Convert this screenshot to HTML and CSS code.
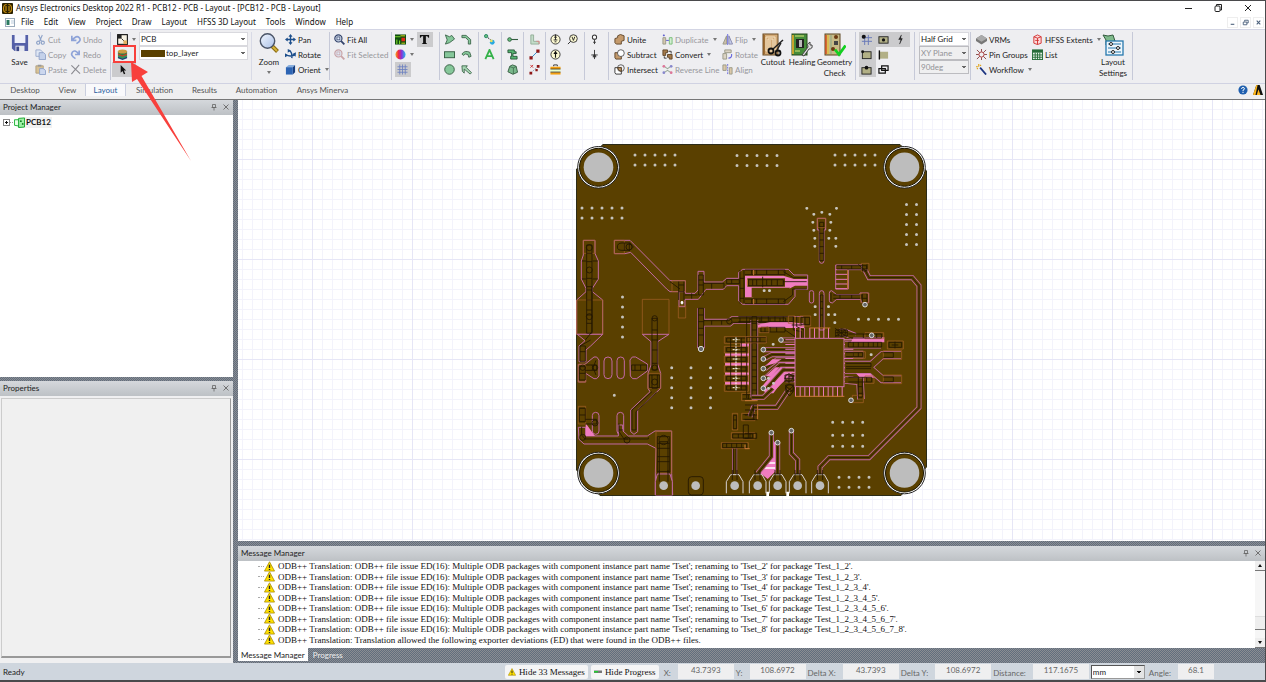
FILE: index.html
```html
<!DOCTYPE html>
<html lang="en">
<head>
<meta charset="utf-8">
<title>Ansys Electronics Desktop 2022 R1 - PCB12 - PCB - Layout</title>
<link rel="stylesheet" href="styles.css">
</head>
<body>
<svg class="defs" aria-hidden="true">
  <defs>
    <linearGradient id="hue"><stop offset="0" stop-color="#f6a21a"/><stop offset=".3" stop-color="#ee2a48"/><stop offset=".6" stop-color="#8a32d8"/><stop offset="1" stop-color="#22b8f0"/></linearGradient>
    <linearGradient id="lens" x2="1" y2="1"><stop offset="0" stop-color="#f3f8ff"/><stop offset="1" stop-color="#a9bfe6"/></linearGradient>
    <symbol id="warn" viewBox="0 0 12 12"><path d="M6 .8 11.5 11H.5Z" fill="#ffe000" stroke="#a08400" stroke-width=".8" stroke-linejoin="round"/><path d="M6 4v3.6M6 8.6v1.3" stroke="#222" stroke-width="1.5"/></symbol>
    <symbol id="pin" viewBox="0 0 8 8"><path d="M2.5 1.500h3v3h-3zM1.500 4.500h5M4 4.500V7.500" fill="none" stroke="#666" stroke-width=".8"/></symbol>
    <symbol id="x" viewBox="0 0 8 8"><path d="M1.5 1.5l5 5M6.5 1.5l-5 5" stroke="#666" stroke-width=".9"/></symbol>
    <symbol id="lensic" viewBox="0 0 12 12"><circle cx="4.8" cy="4.8" r="3.9" fill="#dfe9f7" stroke="currentColor" stroke-width="1.3"/><rect x="3.2" y="3.2" width="3.2" height="3.2" fill="none" stroke="currentColor" stroke-width=".8"/><path d="M7.8 7.8 11.3 11.3" stroke="currentColor" stroke-width="2"/></symbol>
  </defs>
</svg>

<header class="titlebar">
  <svg class="logo" viewBox="0 0 11 11"><rect width="11" height="11" rx="1" fill="#2a2000"/><path d="M4.600 1.500Q1.500 1.500 1.500 5.500t3.100 4M6.400 1.500q3.100 0 3.100 4t-3.100 4M4 3v5M7 3v5" fill="none" stroke="#c58d10" stroke-width="1.200"/></svg>
  <h1>Ansys Electronics Desktop 2022 R1 - PCB12 - PCB - Layout - [PCB12 - PCB - Layout]</h1>
  <div class="winbtns">
    <button aria-label="Minimize"><svg viewBox="0 0 10 10"><path d="M2 5.500h7" stroke="#222"/></svg></button>
    <button aria-label="Restore"><svg viewBox="0 0 10 10"><rect x="2" y="3" width="5" height="5.500" rx="1" fill="none" stroke="#222"/><path d="M3.500 3V1.500H8.500V7H7" fill="none" stroke="#222"/></svg></button>
    <button aria-label="Close"><svg viewBox="0 0 10 10"><path d="M2 2l6 6M8 2l-6 6" stroke="#222"/></svg></button>
  </div>
</header>

<nav class="menubar">
  <svg class="docicon" viewBox="0 0 10 9"><rect x=".5" y=".5" width="9" height="8" fill="#fff" stroke="#9ab"/><rect x="1.500" y="2" width="3" height="5" fill="#2a7a60"/><path d="M6 3h3M6 5h3" stroke="#bcd"/></svg>
  <button>File</button><button>Edit</button><button>View</button><button>Project</button><button>Draw</button><button>Layout</button><button>HFSS 3D Layout</button><button>Tools</button><button>Window</button><button>Help</button>
  <div class="mdibtns">
    <button aria-label="Minimize document"><svg viewBox="0 0 10 10"><path d="M3 7h4" stroke="#4a5f7a" stroke-width="1.200"/></svg></button>
    <button aria-label="Restore document"><svg viewBox="0 0 10 10"><path d="M4 4V2.500h4v3H6.500M2.500 4.500h4v3h-4z" fill="none" stroke="#4a5f7a"/></svg></button>
    <button aria-label="Close document"><svg viewBox="0 0 10 10"><path d="M3 3l4 4M7 3l-4 4" stroke="#4a5f7a" stroke-width="1.200"/></svg></button>
  </div>
</nav>

<section class="ribbon">
  <div class="group g-edit">
    <button class="big save"><svg viewBox="0 0 20 20"><path d="M1 1h18v18H4L1 16Z" fill="#5560a8"/><rect x="4" y="1" width="12" height="9" fill="#eef0fa"/><rect x="5" y="13" width="10" height="6" fill="#e6e8f0"/><rect x="6" y="14" width="3" height="5" fill="#3c4788"/></svg><span>Save</span></button>
    <div class="col c-cut">
      <button class="tool off"><svg viewBox="0 0 12 12"><path d="M4 1l3 7M8 1 5 8" stroke="#8ea3c8" stroke-width="1.200"/><circle cx="3.500" cy="9.500" r="1.700" fill="none" stroke="#8ea3c8" stroke-width="1.300"/><circle cx="8.500" cy="9.500" r="1.700" fill="none" stroke="#8ea3c8" stroke-width="1.300"/></svg><span>Cut</span></button>
      <button class="tool off"><svg viewBox="0 0 12 12"><path d="M1 1h5l2 2v5H1z" fill="#dfe7f4" stroke="#9aabcd"/><path d="M4.500 4h5l2 2v5.500h-7z" fill="#c4d1ea" stroke="#8fa2c8"/></svg><span>Copy</span></button>
      <button class="tool off"><svg viewBox="0 0 12 12"><path d="M1 2h8v8H1z" fill="#d8c296" stroke="#b0a080"/><path d="M3 .8h4v2H3z" fill="#999"/><path d="M5 5h4l2.500 2v4.500H5z" fill="#ccd7ee" stroke="#8fa2c8"/></svg><span>Paste</span></button>
    </div>
    <div class="col">
      <button class="tool off"><svg viewBox="0 0 12 12"><path d="M2 2v5h5M2.500 6.500Q7 1 10 4T7 10.500" fill="none" stroke="#8ea3d8" stroke-width="1.800"/></svg><span>Undo</span></button>
      <button class="tool off"><svg viewBox="0 0 12 12"><path d="M10 1.500v4.500H5.500M9.500 5.500Q5 0 2.500 3.500T6 10.500" fill="none" stroke="#8ea3d8" stroke-width="1.800"/></svg><span>Redo</span></button>
      <button class="tool off"><svg viewBox="0 0 12 12"><path d="M1.500 1.500 11 10.500M10 1 1.500 11" stroke="#8a8a90" stroke-width="1.200"/></svg><span>Delete</span></button>
    </div>
  </div>

  <div class="group g-layer">
    <div class="col c-sel">
      <button class="tool drop" aria-label="Component"><svg viewBox="0 0 12 12"><rect x=".7" y=".7" width="10.600" height="10.600" fill="#f8f3e4" stroke="#111" stroke-width="1.200"/><path d="M1 1h4v4H1z" fill="#222"/><path d="M5 5l3 3" stroke="#222"/><path d="M7 7h4v4H7z" fill="#e0b060"/></svg></button>
      <button class="tool" aria-label="Layer stackup"><svg viewBox="0 0 12 12"><path d="M1 8.500v1.500l5 2 5-2V8.500Z" fill="#223e78"/><path d="M1 6.500v2l5 2 5-2v-2Z" fill="#2f9457"/><path d="M1 4.500v2l5 2 5-2v-2Z" fill="#c24428"/><path d="M1 2.800v2l5 2 5-2v-2Z" fill="#307b45"/><ellipse cx="6" cy="2.800" rx="5" ry="2.200" fill="#cf9a42"/></svg></button>
      <button class="tool on" aria-label="Select"><svg viewBox="0 0 12 12"><path d="M4 1v8.500l2-1.800 1.500 3.500 1.500-.7L7.500 7H10Z" fill="#111"/></svg></button>
    </div>
    <div class="combos">
      <select aria-label="Design"><option>PCB</option></select>
      <select class="swatch" aria-label="Active layer"><option>top_layer</option></select>
    </div>
  </div>

  <div class="group g-zoom">
    <button class="big"><svg viewBox="0 0 20 20"><path d="M12 12 18.500 18.500" stroke="#8d6c10" stroke-width="4"/><path d="M12 12 18 18" stroke="#d4b43c" stroke-width="1.800"/><circle cx="8.500" cy="8" r="7.200" fill="url(#lens)" stroke="#4b5568" stroke-width="1.400"/></svg><span>Zoom</span><i class="caret"></i></button>
    <div class="col">
      <button class="tool"><svg viewBox="0 0 12 12"><path d="M6 1v10M1 6h10" stroke="#1d4f8c" stroke-width="1.500"/><path d="M6 0 8.200 3H3.800ZM6 12 8.200 9H3.800ZM0 6l3-2.200v4.400ZM12 6 9 3.800v4.400Z" fill="#1d4f8c"/></svg><span>Pan</span></button>
      <button class="tool"><svg viewBox="0 0 12 12"><path d="M4.500 1.500Q8 3 7.500 10M1 6.500Q6 9 11 6" fill="none" stroke="#1d4f8c" stroke-width="1.600"/><path d="M3 0v4l3.500-2.500ZM12 3.500 8 5.500l3.500 3ZM0 4.500 0 9l3.500-2Z" fill="#1d4f8c"/></svg><span>Rotate</span></button>
      <button class="tool drop"><svg viewBox="0 0 12 12"><path d="M1 3.500 4 1h7L8.500 3.500Z" fill="#88aede"/><path d="M8.500 3.500 11 1v8l-2.500 2.500Z" fill="#163e80"/><path d="M1 3.500h7.500v8H1Z" fill="#2c64b4"/></svg><span>Orient</span></button>
    </div>
  </div>

  <div class="group g-fit">
    <div class="col">
      <button class="tool fit"><svg><use href="#lensic"/></svg><span>Fit All</span></button>
      <button class="tool off fit pinkish"><svg><use href="#lensic"/></svg><span>Fit Selected</span></button>
    </div>
  </div>

  <div class="group g-view">
    <div class="col">
      <button class="tool drop" aria-label="Board display"><svg viewBox="0 0 12 12"><rect y=".5" width="12" height="11" fill="#0d4d0d"/><path d="M0 3h6M2 6v5M5 7v4" stroke="#7ad02a" stroke-width="1.200"/><path d="M7 4h4v4H7z" fill="#e02818"/><path d="M6 2h5M7 10h4" stroke="#e8e020"/></svg></button>
      <button class="tool drop" aria-label="Colors"><svg viewBox="0 0 12 12"><circle cx="6" cy="6" r="5.500" fill="url(#hue)"/></svg></button>
      <button class="tool on" aria-label="Grid"><svg viewBox="0 0 12 12"><path d="M3 .5v11M6 .5v11M9 .5v11M.5 3h11M.5 6h11M.5 9h11" stroke="#6b7fc0" stroke-width=".9"/></svg></button>
    </div>
    <div class="col"><button class="tool on" aria-label="Text display"><svg viewBox="0 0 12 12"><path d="M1 1h10v3h-.8Q10 2.200 7.500 2.200v7.300L9 10.800H3l1.500-1.300V2.200Q2 2.200 1.800 4H1Z" fill="#111"/></svg></button></div>
  </div>

  <div class="group g-draw">
    <div class="col">
      <button class="tool" aria-label="Polygon"><svg viewBox="0 0 12 12"><path d="M1.500 1 6 3 8.500 1.500 11.500 5.500 6 9.500 1.500 11 3.500 6.500Z" fill="#86c79a" stroke="#335c40" stroke-width=".9"/></svg></button>
      <button class="tool" aria-label="Rectangle"><svg viewBox="0 0 12 12"><rect x=".5" y="3" width="11" height="6.500" fill="#86c79a" stroke="#335c40"/></svg></button>
      <button class="tool" aria-label="Circle"><svg viewBox="0 0 12 12"><circle cx="6" cy="6" r="5.200" fill="#86c79a" stroke="#335c40"/></svg></button>
    </div>
    <div class="col">
      <button class="tool" aria-label="Line"><svg viewBox="0 0 12 12"><path d="M1 1.500h4.500L10.500 6v5H8V7L5 4H1Z" fill="#86c79a" stroke="#335c40" stroke-width=".9"/></svg></button>
      <button class="tool" aria-label="Arc"><svg viewBox="0 0 12 12"><path d="M1 5.500Q4 1 9.500 3.500L11 8 8.500 9 7.500 6Q4.500 4.500 2.500 7Z" fill="#86c79a" stroke="#335c40" stroke-width=".9"/></svg></button>
      <button class="tool" aria-label="Arrow"><svg viewBox="0 0 12 12"><path d="M1 2h6L5.500 3.500 11.500 9.500 10 11 3.500 5.500V10L1.500 8Z" fill="#a9d8b5" stroke="#335c40" stroke-width=".9"/></svg></button>
    </div>
  </div>
  <div class="group g-mid">
    <div class="col">
      <button class="tool" aria-label="Measure"><svg viewBox="0 0 12 12"><path d="M2.500 2.500 9 8" stroke="#111" stroke-dasharray="1.500 1"/><circle cx="2.300" cy="2.300" r="1.800" fill="#6dbb7a" stroke="#286"/><circle cx="9" cy="9" r="2.600" fill="#28a8e0"/><circle cx="8" cy="7.500" r="1.500" fill="#e8e060"/></svg></button>
      <button class="tool" aria-label="Text"><svg viewBox="0 0 12 12"><path d="M1.500 11 6 1l4.500 10M3.300 7.700h5.400" fill="none" stroke="#35b24a" stroke-width="2"/></svg></button>
    </div>
  </div>
  <div class="group g-one">
    <div class="col">
      <button class="tool" aria-label="Pin"><svg viewBox="0 0 12 12"><path d="M4 6h8" stroke="#355c40" stroke-width="1.200"/><circle cx="2.800" cy="6" r="2" fill="#67c07c" stroke="#2b5c3b"/></svg></button>
      <button class="tool" aria-label="Via"><svg viewBox="0 0 12 12"><path d="M1 1h7v2h2v2H6.500v3H11v3H4V8h1V4H1Z" fill="#57b672" stroke="#204c30" stroke-width=".9"/></svg></button>
      <button class="tool" aria-label="Component"><svg viewBox="0 0 12 12"><path d="M1 8.500 3 2.500 6 1l4 1.500L11.500 9l-5 2.200Z" fill="#7ab98c" stroke="#335c40"/><path d="M3 3l4 1.200 3-1.400M7 4.200V11" fill="none" stroke="#335c40" stroke-width=".7"/></svg></button>
    </div>
  </div>
  <div class="group g-one">
    <div class="col">
      <button class="tool" aria-label="Trace corner"><svg viewBox="0 0 12 12"><path d="M2 1h3v7h6v3H2Z" fill="#c3dcc8" stroke="#8aa890" stroke-width=".9"/><path d="M8 8h3v3" fill="none" stroke="#d88"/></svg></button>
      <button class="tool" aria-label="Connect"><svg viewBox="0 0 12 12"><path d="M2 10 10 2" stroke="#28c"/><path d="M.5 8h3.500v3.500H.5zM8 .5h3.500V4H8z" fill="#8e1616"/></svg></button>
      <button class="tool" aria-label="Disconnect"><svg viewBox="0 0 12 12"><path d="M2 10 10 2" stroke="#9ab" stroke-dasharray="2 1"/><path d="M.5 8.500h3v3h-3zM8.500 1h3v3h-3zM7 5.500h2.500V8H7z" fill="#8e1616"/><path d="M1.500 1l3 3M4.500 1l-3 3" stroke="#c33"/></svg></button>
    </div>
  </div>
  <div class="group g-port">
    <div class="col">
      <button class="tool" aria-label="Port"><svg viewBox="0 0 12 12"><circle cx="6" cy="6" r="5" fill="#fbf8d0" stroke="#333"/><path d="M6 .5v6M4 6.500h4M4.500 3.500h3M5 8.500h2" stroke="#222"/></svg></button>
      <button class="tool" aria-label="Current source"><svg viewBox="0 0 12 12"><circle cx="6" cy="6" r="5" fill="#fbf8d0" stroke="#333"/><path d="M6 9.500V3" stroke="#111" stroke-width="1.200"/><path d="M6 2 8.300 5.500H3.700Z" fill="#111"/></svg></button>
      <button class="tool" aria-label="Excitation"><svg viewBox="0 0 12 12"><path d="M4 2.500V1h4v1.500" fill="none" stroke="#333"/><rect x=".5" y="3" width="11" height="2.500" fill="#f4a010"/><rect x=".5" y="5.500" width="11" height="3" fill="#e8ffc8"/><rect x=".5" y="9" width="11" height="2.500" fill="#f4a010"/><path d="M.5 5.500h11M.5 8.800h11" stroke="#222" stroke-width=".8"/></svg></button>
    </div>
    <div class="col"><button class="tool" aria-label="Voltage probe"><svg viewBox="0 0 12 12"><circle cx="7" cy="5" r="4.200" fill="#fbf8d0" stroke="#333"/><path d="M5.500 3 7 7l1.500-4M4 8 1 11" fill="none" stroke="#222"/></svg></button></div>
  </div>
  <div class="group g-gnd">
    <div class="col">
      <button class="tool" aria-label="Terminal"><svg viewBox="0 0 12 12"><circle cx="6" cy="3.500" r="2.300" fill="#fff" stroke="#333" stroke-width="1.100"/><path d="M6 6v5M4.500 9h3" stroke="#333"/></svg></button>
      <button class="tool" aria-label="Ground"><svg viewBox="0 0 12 12"><path d="M6 1v10M2.500 6.500h7M4 8.500h4" stroke="#333"/><circle cx="6" cy="7.500" r="1.500" fill="#333"/></svg></button>
    </div>
  </div>

  <div class="group g-bool">
    <div class="col c-unite">
      <button class="tool"><svg viewBox="0 0 12 12"><path d="M1 5 4 4V2l3-1.500L11 2v5L8 8v3H2.500L1 9.500Z" fill="#c49a6c" stroke="#5e4528"/></svg><span>Unite</span></button>
      <button class="tool"><svg viewBox="0 0 12 12"><path d="M1 4h7v7H2L1 9.500Z" fill="#c49a6c" stroke="#5e4528"/><circle cx="7.500" cy="4.500" r="3.700" fill="#fff" stroke="#333" stroke-width=".8"/></svg><span>Subtract</span></button>
      <button class="tool"><svg viewBox="0 0 12 12"><path d="M1 4h7v7H2L1 9.500Z" fill="#fff" stroke="#333"/><circle cx="7.500" cy="4.500" r="3.700" fill="none" stroke="#333" stroke-width=".8"/><path d="M4 4h4v4Q4.500 7.500 4 4Z" fill="#c49a6c" stroke="#5e4528"/></svg><span>Intersect</span></button>
    </div>
    <div class="col c-dup">
      <button class="tool off drop"><svg viewBox="0 0 12 12"><path d="M1 4h3v7H1z" fill="#d5c8b0" stroke="#998"/><path d="M8 4h3v7H8z" fill="#d2efd2" stroke="#7b7"/><path d="M4.500 7h3M2 .5v2M1 1.500h2" stroke="#55c"/></svg><span>Duplicate</span></button>
      <button class="tool drop"><svg viewBox="0 0 12 12"><path d="M1 1h5v3H4v3H1zM6 6h5v5H8V9H6z" fill="#a4794a" stroke="#5e4528"/><path d="M7 2.500h3V5M5 10H2.500V8" fill="none" stroke="#333"/></svg><span>Convert</span></button>
      <button class="tool off"><svg viewBox="0 0 12 12"><path d="M1.500 2 6 5l4.500-3M1.500 10 6 7l4.500 3" fill="none" stroke="#9a9" stroke-width="1.200"/><circle cx="2" cy="2.500" r="1.500" fill="#d79"/><circle cx="10" cy="2.500" r="1.500" fill="#88c"/><circle cx="2" cy="9.500" r="1.500" fill="#88c"/><circle cx="10" cy="9.500" r="1.500" fill="#d79"/></svg><span>Reverse Line</span></button>
    </div>
    <div class="col c-flip">
      <button class="tool off drop"><svg viewBox="0 0 12 12"><path d="M5 2v9H1Z" fill="#cdbfa8" stroke="#998"/><path d="M7.500 2v9h4Z" fill="#c5cdec" stroke="#88a"/><path d="M6.200 0v12" stroke="#66d"/></svg><span>Flip</span></button>
      <button class="tool off"><svg viewBox="0 0 12 12"><path d="M1 5h4v6H1zM3 1h7v3H3z" fill="#dcd4c4" stroke="#998"/><path d="M7 10q4 0 3.500-4.500" fill="none" stroke="#66d" stroke-width="1.200"/></svg><span>Rotate</span></button>
      <button class="tool off"><svg viewBox="0 0 12 12"><path d="M1 1h3.500v6H1zM8 4h3v7H8z" fill="#dcc8a8" stroke="#998"/><path d="M6.200 0v12" stroke="#66d" stroke-dasharray="2 1"/></svg><span>Align</span></button>
    </div>
    <button class="big tall b-cut"><svg viewBox="0 0 22 24"><rect x="1" y="1" width="15" height="21" fill="#d4ab78" stroke="#6a4a22"/><path d="M4 4h9v14H4zM6 6h5v10H6zM8 7v8" fill="none" stroke="#f4e2c2"/><path d="M2 2v19" stroke="#8c5a20" stroke-width="1.500"/><path d="M21 7 11 16M19 10 15 17" stroke="#222" stroke-width="1.500"/><circle cx="9" cy="18" r="2.500" fill="none" stroke="#111" stroke-width="1.800"/><circle cx="16" cy="20" r="2.500" fill="none" stroke="#111" stroke-width="1.800"/></svg><span>Cutout</span></button>
    <button class="big tall b-heal"><svg viewBox="0 0 22 24"><rect x="1" y="1" width="15" height="21" fill="#458c3a" stroke="#264a1a"/><path d="M2 2v19" stroke="#c7a42c" stroke-width="2"/><path d="M5 6h8v9H5z" fill="#222"/><path d="M8 7h3v7H8z" fill="#bbb"/><path d="M4 18h5M4 3h9" stroke="#dce878"/><path d="M11 22l6-8q-2-3 2-5l0 3 2 0q1 4-3 4l-5 7Z" fill="#ddd" stroke="#444"/></svg><span>Healing</span></button>
    <button class="big tall"><svg viewBox="0 0 22 24"><rect x="1" y="1" width="15" height="21" fill="#c8ba86" stroke="#5a4420"/><path d="M2 2v19" stroke="#d84818" stroke-width="1.400"/><path d="M4 2v19M7 17h6" stroke="#e8c020"/><path d="M7 2v19" stroke="#8aa888"/><circle cx="12" cy="4" r="2" fill="#6b3912"/><circle cx="9" cy="16" r="2" fill="#6b3912"/><path d="M10 8h4v4h-4z" fill="#444"/><path d="M11 16.500l4 5 6.500-9" fill="none" stroke="#12d020" stroke-width="2.800"/></svg><span>Geometry<br>Check</span></button>
  </div>

  <div class="group g-snap">
    <div class="snap">
      <button class="tool on" aria-label="Snap grid"><svg viewBox="0 0 12 12"><path d="M4 1v11M8 1v11M1 4h11M1 8h11" stroke="#6677b8"/><circle cx="3" cy="3" r="2.200" fill="#111"/></svg></button>
      <button class="tool on" aria-label="Snap center"><svg viewBox="0 0 12 12"><rect x="1" y="3" width="10" height="7" fill="#b2b086" stroke="#222"/><circle cx="6" cy="6.500" r="1.800" fill="#111"/></svg></button>
      <button class="tool on" aria-label="Snap electrical"><svg viewBox="0 0 12 12"><path d="M7 1 4 6h2.500L5 11 8 5H6Z" fill="#111" stroke="#111" stroke-width=".4"/></svg></button>
      <button class="tool on" aria-label="Snap vertex"><svg viewBox="0 0 12 12"><rect x="1.500" y="3" width="9.500" height="7.500" fill="#b2b086" stroke="#222"/><circle cx="1.800" cy="3" r="1.600" fill="#111"/></svg></button>
      <button class="tool" aria-label="Snap edge"><svg viewBox="0 0 12 12"><rect x="1" y="3" width="10" height="7.500" fill="#b2b086"/><path d="M1.500 1.500v10" stroke="#111" stroke-width="1.500"/></svg></button><i></i>
      <button class="tool on" aria-label="Snap midpoint"><svg viewBox="0 0 12 12"><rect x="1" y="4" width="10" height="7" fill="#b2b086" stroke="#222"/><circle cx="6" cy="4" r="2" fill="#111"/></svg></button>
      <button class="tool" aria-label="Snap intersection"><svg viewBox="0 0 12 12"><path d="M4 2h7v5H4zM1 5h7v5H1z" fill="none" stroke="#111" stroke-width="1.300"/></svg></button>
    </div>
  </div>
  <div class="group g-grid">
    <div class="combos">
      <select aria-label="Grid"><option>Half Grid</option></select>
      <select aria-label="Plane" disabled><option>XY Plane</option></select>
      <select aria-label="Angle" disabled><option>90deg</option></select>
    </div>
  </div>
  <div class="group g-last">
    <div class="col c-vrm">
      <button class="tool"><svg viewBox="0 0 12 12"><path d="M0 5 6 1l6 4v2.500L6 11.500 0 7.500Z" fill="#777"/><path d="M0 5 6 1l6 4-6 3.500Z" fill="#aaa"/></svg><span>VRMs</span></button>
      <button class="tool"><svg viewBox="0 0 12 12"><path d="M1 1l3 3M6 0v3M11 1 8 4M0 6h3M9 6h3M1 11l3-3M6 9v3M11 11 8 8" stroke="#844"/><circle cx="6" cy="6" r="2.800" fill="none" stroke="#a33"/></svg><span>Pin Groups</span></button>
      <button class="tool drop"><svg viewBox="0 0 12 12"><path d="M4.500 4 11 11.500" stroke="#1c3480" stroke-width="1.900"/><path d="M3 0v3M0 3h2M5.500 1 4.500 2M1 5.500 2 4.500" stroke="#e0a010" stroke-width="1.200"/></svg><span>Workflow</span></button>
    </div>
    <div class="col c-hfss">
      <button class="tool drop"><svg viewBox="0 0 12 12"><path d="M2 3 6 1l4 2v7l-4 1.500L2 10Z" fill="#fbdada" stroke="#d23030"/><path d="M2 3l4 1.500L10 3M6 4.500v7M3.500 7h4" fill="none" stroke="#d23030"/></svg><span>HFSS Extents</span></button>
      <button class="tool"><svg viewBox="0 0 12 12"><rect x=".5" y="1" width="11" height="10.500" fill="#e4f2e6" stroke="#256a38"/><path d="M.5 1h11v3H.5z" fill="#256a38"/><path d="M3.500 4v7.500M6 4v7.500M8.500 4v7.500M.5 6.500h11M.5 9h11" stroke="#256a38"/></svg><span>List</span></button>
    </div>
    <button class="big tall"><svg viewBox="0 0 22 24"><path d="M1 2l5 1 5-1 2 6-9 4 0-5Z" fill="#7fba8c" stroke="#355c40"/><rect x="4" y="8" width="17" height="14" fill="#eef6fb" stroke="#2779ae" stroke-width="1.300"/><path d="M6 11h13M6 15h13M6 19h13" stroke="#2779ae" stroke-width="1.200"/><circle cx="9" cy="11" r="1.500" fill="#fff" stroke="#222"/><circle cx="16" cy="15" r="1.500" fill="#fff" stroke="#222"/><circle cx="11" cy="19" r="1.500" fill="#fff" stroke="#222"/></svg><span>Layout<br>Settings</span></button>
  </div>
</section>

<nav class="tabs">
  <button>Desktop</button><button>View</button><button class="active">Layout</button><button>Simulation</button><button>Results</button><button>Automation</button><button>Ansys Minerva</button>
  <div class="help">
    <button aria-label="Help"><svg viewBox="0 0 12 12"><circle cx="6" cy="6" r="5.500" fill="#1f5fae"/><path d="M4.200 4.600Q4.300 3 6 3t1.800 1.500Q7.800 5.500 6 6.200V7.500M6 8.400V9.600" fill="none" stroke="#fff" stroke-width="1.200"/></svg></button>
    <button aria-label="Ansys"><svg viewBox="0 0 12 12"><path d="M0 12 4 0h4l4 12Z" fill="#111"/><path d="M0 12 4 0h1.500L3 12ZM4.500 12 6.500 5 9 12Z" fill="#ffb71b"/></svg></button>
  </div>
</nav>

<main class="work">
  <aside class="side">
    <section class="pane tree">
      <header class="panehead"><h2>Project Manager</h2><button aria-label="Pin"><svg><use href="#pin"/></svg></button><button aria-label="Close"><svg><use href="#x"/></svg></button></header>
      <ul class="projects"><li>
        <svg class="expand" viewBox="0 0 11 9"><rect x=".5" y="1.500" width="6" height="6" fill="#fff" stroke="#888"/><path d="M2 4.500h3M3.500 3v3" stroke="#111"/><path d="M7 4.500h4" stroke="#999" stroke-dasharray="1 1"/></svg>
        <svg class="proj" viewBox="0 0 12 12"><path d="M.5 3h4l1.500 1.500V10l-5.500-1Z" fill="#e8ffe8" stroke="#15b030"/><path d="M5 1.500 11.500 1v10l-6.500.5Z" fill="#9df0a4" stroke="#12a028"/><circle cx="7.500" cy="4.500" r="1" fill="#0a7a1c"/><circle cx="9.500" cy="7.500" r="1" fill="#0a7a1c"/></svg>
        <span>PCB12</span></li></ul>
    </section>
    <div class="split h"></div>
    <section class="pane props">
      <header class="panehead"><h2>Properties</h2><button aria-label="Pin"><svg><use href="#pin"/></svg></button><button aria-label="Close"><svg><use href="#x"/></svg></button></header>
      <div class="sheet"></div>
    </section>
  </aside>
  <div class="split v"></div>
  <div class="center">
    <section class="canvas">
      <svg class="board" viewBox="571 136 361 370" role="img" aria-label="PCB layout">
        <path class="copper edge" d="M603 144.500H900L926.500 171V467L901 495.500H600L576.500 470V169Z"/>
        <g class="mount">
          <g class="ring"><circle cx="598.500" cy="167.300" r="20.800"/><circle cx="904.500" cy="167.300" r="20.800"/><circle cx="598.500" cy="473" r="20.800"/><circle cx="904.500" cy="473" r="20.800"/></g>
          <g class="rim"><circle cx="598.500" cy="167.300" r="19"/><circle cx="904.500" cy="167.300" r="19"/><circle cx="598.500" cy="473" r="19"/><circle cx="904.500" cy="473" r="19"/></g>
          <g class="drill"><circle cx="598.500" cy="167.300" r="14.800"/><circle cx="904.500" cy="167.300" r="14.800"/><circle cx="598.500" cy="473" r="14.800"/><circle cx="904.500" cy="473" r="14.800"/></g>
        </g>
        <path class="vias" d="M635 155h41M635 165h41M582 208h41M582 218h41M737 155.500h41M737 165.500h41M835 155h41M835 165h41M906.500 204.500v41M916.500 204.500v41M622.500 297v41M858.500 319.300h41M671.700 367.700v41M691 367.700v41M710.500 367.700v41M832.700 422.300h31M832.700 435.300h31M832.700 446.300h31M839 477.300h31M839 487.300h31M614.300 395.300h1"/>

        <g transform="translate(570 135) scale(.33333)">
          <!-- upper left quadrant -->
          <path class="net" d="M40 316H75V355L85 378V432L67 460V470L98 495V598H20V495L48 470V460L34 432V378L40 360Z"/>
          <path class="net" d="M133 316H180L192 328 300 437H346V470H300L290 462 182 352 165 356H133Z"/>
          <path class="net" d="M384 409H402V441H457L470 430H506V412L518 403H655L672 420H713V463H675V485L655 508H518L506 498V452H470L460 463H408L385 493H345V515H327V470H346V475H375L384 465Z"/>
          <path class="pink" d="M525 422H640L672 432H713V452H675L655 463H550V487H525Z"/>
          <path class="copper" d="M532 430H645V455H532ZM545 458H660L648 487H545Z"/>
          <path class="pad" d="M40 316h35v39h-35zM133 316h30v40h-30zM325 513h22v36h-22zM217 493h80v105h-80zM20 495h78v103h-78zM306 437h40v33h-40z"/>
          <path class="ink" d="M50 330h16v265h-16zM50 355h16M50 380h16M50 430h16M50 465h16M50 495h16M50 540h16M36 378h12M68 378h15M36 432h12M68 432h15M142 336q0-12 14-12h24l10 12-10 10h-24q-14 0-14-10M163 324v24M178 324v24M300 440l30 22M326 440v55M342 440v55M326 450h16M326 470h16M386 420h14v60h-14zM386 435h14M386 450h14M402 445h60v14M425 445v16M345 480h38M365 475v16M470 434h38v12h-38zM485 434v12M510 405v100M522 405v100M510 430h12M510 460h12M510 490h12M525 405h120v14h-120M545 405v14M560 405v14M590 405v14M625 405v14M525 492h120v14h-120M545 492v14M560 492v14M590 492v14M625 492v14M535 434h105v18h-105zM548 434v18M560 434v18M590 434v18M605 434v18M622 434v18M578 425v32M640 410l30 18h40M640 500l28-20v-18h42M640 440h70"/>
          <circle class="ink" cx="58" cy="338" r="9"/><circle class="ink" cx="58" cy="405" r="9"/>
          <circle class="ink" cx="58" cy="545" r="9"/><circle class="ink" cx="177" cy="336" r="9"/>
          <path class="orange" d="M551 405v16M551 492v16M532 434v18"/>
          <path class="track" d="M393 520V640M393 563H478L488 555H700"/><path class="core" d="M393 520V640M393 563H478L488 555H700"/>
          <path class="ink" d="M385 520h16v115h-16zM385 540h16M385 560h16M385 580h16M385 600h16M402 557h75l10-8h160v13h-160M425 557v12M455 557v12M510 549v13M540 549v13M570 549v13M600 549v13M630 549v13"/>
          <circle class="ink" cx="478" cy="559" r="8"/>
          <path class="white" d="M332 503h8M336 498v10"/>
        </g>

        <g transform="translate(745 135) scale(.33333)">
          <!-- upper right quadrant -->
          <path class="net" d="M217 250h25v35h-5v92q0 8-7 8t-7-8v-92h-6z"/>
          <path class="net" d="M223 475q0-8 7-8t7 8V585h-14z"/>
          <path class="ink" d="M224 262h12v115h-12zM224 275h12M224 295h12M224 315h12M224 335h12M224 355h12M226 480h8v100h-8zM226 500h8M226 520h8M226 540h8"/>
          <rect class="net" x="193" y="467" width="13" height="37" rx="6"/>
          <path class="net" d="M253 475q0-8 7-8l15 12H345V474H371V503H350L347 493H275L262 504Q253 504 253 496Z"/>
          <path class="ink" d="M258 474v26M265 480h85v10h-85M285 480v10M320 480v10M352 476v30h14v-30zM352 490h14"/>
          <path class="pad" d="M347 475h24v28h-24zM349 385h23v24h-23zM217 250h25v28h-25z"/>
          <path class="track thin" d="M360 405 372 428H502L522 452V818L372 968H252L225 996V1022"/><path class="core thin" d="M360 405 372 428H502L522 452V818L372 968H252L225 996V1022"/>
          <path class="fine" d="M360 405 372 428H502L522 452V818L372 968H252L225 996V1022"/>
          <path class="net" d="M272 390h78v14h-40v58h-38z"/>
          <path class="pinkline" d="M272 404h36M272 418h36M272 433h36M272 447h36M272 461h36"/>
          <path class="orange" d="M308 404v58"/>
          <path class="ink" d="M275 392h90v10h-90M290 392v10M320 392v10M340 388l22 20M352 388v20h14v-20"/>
          <path class="dots" d="M185 220h1M274 220h1M206 238h1M230 232h1M254 238h1M203 262h1M257 262h1M206 286h1M254 286h1M209 310h1M251 310h1M272 310h1M209 334h1M272 334h1M210 515h1M250 515h1M210 539h1M250 539h1M269 539h1M57 467h1M73 467h1M269 563h1M378 659h1"/>
          <circle class="via" cx="360" cy="509" r="7"/>
        </g>

        <g transform="translate(570 310) scale(.33333)">
          <!-- lower left quadrant -->
          <path class="net" d="M27 108 45 92 22 73H98L62 108 48 120V155H27Z"/>
          <path class="net" d="M25 163H45L72 141H80L87 150V198L80 206H72L47 190V216H25Z"/>
          <rect class="net" x="102" y="141" width="24" height="65" rx="12"/><rect class="net" x="141" y="141" width="22" height="65" rx="11"/>
          <path class="net" d="M180 150 187 141H197L232 162V183L200 206H188L181 198Z"/>
          <path class="net" d="M217 73H297L263 95V162L272 190V235L203 300V365L192 373 182 365V300L240 245 234 235V190L243 165V95Z"/>
          <rect class="net" x="67" y="307" width="20" height="66" rx="10"/><rect class="net" x="141" y="307" width="20" height="66" rx="10"/>
          <path class="net" d="M25 352H47V378H145V345H158V362L175 378H232L255 363H305V490L308 555H256V492L258 415 232 402H42L27 388Z"/>
          <path class="pink" d="M47 340 75 378H47Z"/>
          <path class="pad" d="M25 163h22v53h-22zM25 289h22v53h-22zM234 190h37v45h-37zM258 364h47v125h-47zM454 398h81v18h-81zM487 310h16v50h-16zM484 368h70v19h-70zM515 250h40v22h-40zM515 310h40v22h-40z"/>
          <path class="ink" d="M50-70h16v135l-20 25M50 0h16M50 40h16M62 90 30 108h16v46H30v-46M30 125h16M28 170h18v40H28zM28 190h18M46 165h34v16H46M66 165l12 30M66 181l12-30M185 165h45v16h-45zM195 165v16M212 165v16M246 25h16v155h-16zM246 60h16M246 90h16M246 120h16M246 160h16M238 195h30v38h-30zM246 195v40h16v-40M246 245l-60 55v60h12v-55l62-58M28 295h18v40H28zM28 315h18M46 328h34v14H46M35 350v25l10 12h190v-5M147 340v25l15 22h12M147 360h12M262 380h37v145h-37zM262 400h37M262 415h37M262 440h37M262 455h37M262 485h37M268 395v120h26v-120zM458 400h72v13h-72zM470 400v13M485 400v13M500 400v13M515 400v13M490 316h10v40h-10zM490 330h10M488 372h60v12h-60zM505 372v12M520 372v12M535 345v40h-15v-40zM520 314h35v14h-35M518 254h36v13h-36M535 254v13"/>
          <circle class="ink" cx="254" cy="25" r="8"/><circle class="ink" cx="254" cy="173" r="8"/><circle class="ink" cx="254" cy="216" r="9"/><circle class="ink" cx="75" cy="173" r="8"/><circle class="ink" cx="38" cy="173" r="8"/><circle class="ink" cx="75" cy="339" r="9"/><circle class="ink" cx="38" cy="382" r="9"/><circle class="ink" cx="281" cy="390" r="14"/><circle class="ink" cx="171" cy="390" r="9"/>
          <path class="track thin" d="M494 416V495"/><path class="core thin" d="M494 416V495"/><path class="ink" d="M490 416V495M498 416V495"/>
          <rect class="ink" x="355" y="500" width="45" height="55" rx="10"/>
          <!-- decoupling row with pink gaps -->
          <rect class="pink" x="465" y="98" width="72" height="128"/>
          <path class="copper" d="M465 80h70v19h-70zM465 110h70v20h-70zM465 139h70v19h-70zM465 168h70v19h-70zM465 196h70v19h-70zM465 225h70v19h-70zM463 98h48v12h-48z"/>
          <path class="pad" d="M463 80h72v20h-72zM463 109h72v20h-72zM463 138h72v20h-72zM463 167h72v20h-72zM463 195h72v20h-72zM463 224h72v20h-72z"/>
          <path class="ink" d="M470 84h58v12h-58zM470 113h58v12h-58zM470 142h58v12h-58zM470 171h58v12h-58zM470 199h58v12h-58zM470 228h58v12h-58zM482 84v156M514 84v156"/>
          <path class="white dash" d="M498 82v160M488 89h20M488 119h20M488 147h20M488 176h20M488 205h20M488 233h20"/>
          <circle class="via" cx="393" cy="117" r="8"/>
          <path class="net" d="M256 555V515L262 492H300L307 515V555"/>
          <path class="ink" d="M268 480v35M294 480v35"/>
        </g>

        <g transform="translate(745 310) scale(.33333)">
          <!-- lower right quadrant -->
          <path class="track" d="M28 30V262"/><path class="core" d="M28 30V262"/>
          <path class="pink" d="M38 44 75 36H140L178 42V54H80L68 50 40 54Z"/>
          <path class="ink" d="M21 20h14v245H21zM5 20v245M21 40h14M21 60h14M21 80h14M21 100h14M21 120h14M21 140h14M21 160h14M21 180h14M21 200h14M21 220h14M21 240h14M-20 20h165v15H-20M50 20v15M70 20v15M90 20v15M115 20v15M48 52h72v14H48zM60 52v14M75 52v14M95 52v14M120 60l30 20M0 82h65v14H0M45 82v14"/>
          <path class="pad" d="M2 80h62v19H2zM130 18h20v22h-20zM165 18h32v30h-32zM42 52h30v16H42z"/>
          <path class="ink" d="M145 20v40l25 5v20M155 20v30l22 10v25M168 22h26v22h-26zM180 22v22M140 45h30"/>
          <g class="fan"><path class="pink" d="M60 250 52 228 118 150H150V190H130L85 250Z"/>
            <path class="track thin" d="M55 119H150M55 147 80 134H150M60 176 95 150H150M60 205 105 165H150M65 235 115 180H150M20 262 55 262 120 200H150M108 90H150M130 240 95 292H25L15 320"/>
            <path class="core thin" d="M55 119H150M55 147 80 134H150M60 176 95 150H150M60 205 105 165H150M65 235 115 180H150M20 262 55 262 120 200H150M108 90H150M130 240 95 292H25L15 320"/>
            <path class="fine" d="M55 119H150M55 147 80 134H150M60 176 95 150H150M60 205 105 165H150M65 235 115 180H150M20 262 55 262 120 200H150M108 90H150M130 240 95 292H25L15 320"/>
            <path class="pink" d="M100 205 120 185H145L90 240 78 232ZM62 168 82 148H110L90 160ZM62 198 92 172H104L78 200Z"/></g>
          <path class="pins" stroke-width="30" d="M136 88V226M310 88V226M150 245H300M193 69H256M150 69H180"/>
          <path class="ink" d="M120 195h25v20h-25zM132 190v30M118 205h28M122 225h24v18l-12 15-12-15zM125 230l18 15M143 230l-18 15M0 285h38v15H0M0 315h38v14H0M15 300v20M25 285v45M0 370h35v15H0M15 370v15"/>
          <circle class="ink" cx="132" cy="203" r="11"/><circle class="ink" cx="134" cy="234" r="11"/>
          <rect class="chip" x="150" y="85" width="147" height="145"/>
          <path class="orange" d="M150 259H298M193 54H256M0 272H38M38 283V328M0 404V416H14"/>
          <path class="track" d="M300 104H408M300 134H355M300 210 345 214 348 268M282 68H300L330 80"/><path class="core" d="M300 104H408M300 134H355M300 210 345 214 348 268M282 68H300L330 80"/>
          <path class="pink" d="M325 82H418V97H318ZM330 187H378L390 203H345Z"/>
          <path class="track" d="M300 164H380L412 135H468M300 180H380L412 208H468"/><path class="core" d="M300 164H380L412 135H468M300 180H380L412 208H468"/>
          <path class="pad" d="M415 122h55v26h-55zM415 195h55v26h-55zM427 93h48v24h-48zM360 68h56v18h-56zM360 198h27v22h-27zM325 125h36v20h-36zM322 256h33v22h-33z"/>
          <path class="ink" d="M310 97h100v14H310zM325 97v14M340 97v14M355 97v14M370 97v14M385 97v14M398 97v14M432 97h38v15h-38zM450 95v20M440 105h20M303 128h50v12h-50M325 128v12M340 128v12M415 128h30v14h-30M415 201h30v14h-30M303 160h75v10h-75M303 176h75M272 60h35v18h-35zM290 58v22M272 68h35M310 72h100v12H310M355 72v12M395 72v12M310 202h70v14h-70M340 202v60h12v-60M365 202v14M340 230h12M340 250h12M270 55l35 25M270 80l35-22"/>
          <circle class="ink" cx="290" cy="68" r="12"/>
          <!-- connector fan-out -->
          <path class="pink" d="M79 385 92 400V450L96 480 68 507 40 485 75 450Z"/>
          <path class="white" d="M62 459H94M48 474H96"/>
          <path class="track thin" d="M79 370V440L38 490M98 398V500M139 362V430L158 450V500"/><path class="core thin" d="M79 370V440L38 490M98 398V500M139 362V430L158 450V500"/>
          <path class="fine" d="M79 370V440L38 490M98 398V500M139 362V430L158 450V500"/>
          <g class="castle"><path d="M13 550V515L26 494H51L63 515V550"/><path d="M73 550V515L86 494H111L123 515V550"/><path d="M133 550V515L146 494H171L183 515V550"/><path d="M200 550V515L213 494H238L250 515V550"/><path d="M-56 550V515L-43 494H-18L-6 515V550"/></g>
          <path class="ink" d="M30 480v30M45 480v30M30 492h16M90 480v30M105 480v30M90 492h16M150 480v30M165 480v30M150 492h16M217 480v30M233 480v30M217 492h16M-38 480v30M-24 480v30"/>
          <path class="gap" d="M68 545V558M128 545V558"/>
          <g class="via"><circle cx="55" cy="119" r="7"/><circle cx="55" cy="147" r="7"/><circle cx="55" cy="176" r="7"/><circle cx="55" cy="205" r="7"/><circle cx="55" cy="235" r="7"/><circle cx="108" cy="90" r="7"/><circle cx="380" cy="76" r="7"/><circle cx="318" cy="271" r="7"/><circle cx="79" cy="368" r="7"/><circle cx="98" cy="398" r="7"/><circle cx="139" cy="362" r="7"/></g>
          <path class="dots" d="M84 103h1M70 205h1M85 220h1M70 235h1"/>
          <g class="hole"><circle cx="38" cy="527" r="13"/><circle cx="98" cy="527" r="13"/><circle cx="158" cy="527" r="13"/><circle cx="225" cy="527" r="13"/><circle cx="-31" cy="527" r="13"/><circle cx="-148" cy="527" r="13"/><circle cx="-244" cy="527" r="13"/></g>
        </g>
      </svg>
    </section>
    <div class="split h"></div>
    <section class="messages">
      <header class="panehead"><h2>Message Manager</h2><button aria-label="Pin"><svg><use href="#pin"/></svg></button><button aria-label="Close"><svg><use href="#x"/></svg></button></header>
      <div class="msgbody">
        <ul class="msglist">
          <li><svg><use href="#warn"/></svg>ODB++ Translation: ODB++ file issue ED(16): Multiple ODB packages with component instance part name 'Tset'; renaming to 'Tset_2' for package 'Test_1_2'.</li>
          <li><svg><use href="#warn"/></svg>ODB++ Translation: ODB++ file issue ED(16): Multiple ODB packages with component instance part name 'Tset'; renaming to 'Tset_3' for package 'Test_1_2_3'.</li>
          <li><svg><use href="#warn"/></svg>ODB++ Translation: ODB++ file issue ED(16): Multiple ODB packages with component instance part name 'Tset'; renaming to 'Tset_4' for package 'Test_1_2_3_4'.</li>
          <li><svg><use href="#warn"/></svg>ODB++ Translation: ODB++ file issue ED(16): Multiple ODB packages with component instance part name 'Tset'; renaming to 'Tset_5' for package 'Test_1_2_3_4_5'.</li>
          <li><svg><use href="#warn"/></svg>ODB++ Translation: ODB++ file issue ED(16): Multiple ODB packages with component instance part name 'Tset'; renaming to 'Tset_6' for package 'Test_1_2_3_4_5_6'.</li>
          <li><svg><use href="#warn"/></svg>ODB++ Translation: ODB++ file issue ED(16): Multiple ODB packages with component instance part name 'Tset'; renaming to 'Tset_7' for package 'Test_1_2_3_4_5_6_7'.</li>
          <li><svg><use href="#warn"/></svg>ODB++ Translation: ODB++ file issue ED(16): Multiple ODB packages with component instance part name 'Tset'; renaming to 'Tset_8' for package 'Test_1_2_3_4_5_6_7_8'.</li>
          <li><svg><use href="#warn"/></svg>ODB++ Translation: Translation allowed the following exporter deviations (ED) that were found in the ODB++ files.</li>
        </ul>
        <div class="scroll"><button class="up" aria-label="Scroll up"></button><span class="thumb"></span><button class="down" aria-label="Scroll down"></button></div>
      </div>
      <div class="msgtabs"><button class="active">Message Manager</button><button>Progress</button></div>
    </section>
  </div>
</main>

<footer class="status">
  <span class="ready">Ready</span>
  <button class="toggle"><svg><use href="#warn"/></svg>Hide 33 Messages</button>
  <button class="toggle"><svg viewBox="0 0 8 8"><rect y="2.500" width="8" height="2.500" fill="#777"/><rect y="3" width="4" height="1.500" fill="#2c3"/></svg>Hide Progress</button>
  <label for="fx">X:</label><input id="fx" value="43.7393" readonly>
  <label for="fy">Y:</label><input id="fy" value="108.6972" readonly>
  <label for="dx">Delta X:</label><input id="dx" value="43.7393" readonly>
  <label for="dy">Delta Y:</label><input id="dy" value="108.6972" readonly>
  <label for="ds">Distance:</label><input id="ds" value="117.1675" readonly>
  <select class="unit" aria-label="Unit"><option>mm</option></select>
  <label for="an">Angle:</label><input id="an" class="short" value="68.1" readonly>
</footer>

<svg class="callout" viewBox="0 0 82 118" aria-hidden="true"><rect x="4" y="3" width="21" height="16" fill="none" stroke="#f8403c" stroke-width="2"/><path d="M21 19 38 29 31.500 33 81 118 27 36 22 39Z" fill="#f8403c"/></svg>
</body>
</html>
```
FILE: styles.css
```css
* { box-sizing: border-box; }
html, body { height: 100%; }
body {
  margin: 0;
  display: flex;
  flex-direction: column;
  overflow: hidden;
  border: solid #4a4a4c;
  border-width: 1px 1px 2px 0;
  background: #f0f0f1;
  color: #222;
  font: 8px/10px Lato, "Open Sans", sans-serif;
  position: relative;
}
h1, h2, ul { margin: 0; padding: 0; font: inherit; list-style: none; }
button { margin: 0; padding: 0; border: 0; background: none; color: inherit; font: inherit; white-space: nowrap; }
svg { display: block; flex: none; }
.defs { position: absolute; width: 0; height: 0; }

.titlebar, .menubar { display: flex; align-items: center; flex: none; height: 14px; background: #fff; color: #111; font: 8px/10px "Noto Sans", "Open Sans", sans-serif; }
.titlebar { padding-left: 2px; }
.titlebar h1 { margin-left: 3px; }
.logo { width: 11px; height: 11px; }
.winbtns { display: flex; gap: 20px; margin-left: auto; padding-right: 12px; }
.winbtns svg { width: 10px; height: 10px; }

.menubar { gap: 10px; padding-left: 5px; }
.docicon { width: 10px; height: 9px; margin-right: -4px; }
.mdibtns { display: flex; gap: 2px; margin-left: auto; padding-right: 1px; }
.mdibtns button { border: 1px solid #eee; }
.mdibtns svg { width: 9px; height: 9px; }

.ribbon { display: flex; flex: none; height: 55px; padding-top: 2px; border-top: 1px solid #d3d5e4; border-bottom: 1px solid #d0d2e2; background: #eeeef1; }
.group { display: flex; flex: none; height: 48px; padding-left: 4px; border-right: 1px solid #c6c9d8; }
.col { display: grid; grid-template-rows: repeat(3, 15px); align-content: start; justify-items: start; }
.tool { display: flex; align-items: center; height: 15px; gap: 2px; }
.tool svg { width: 11px; height: 11px; }
.tool.on { background: #cbcbcd; }
.tool.off { color: #97979c; }
.tool.drop::after, .caret { content: ""; width: 0; height: 0; margin-left: 2px; border: 2px solid transparent; border-top: 3px solid #777; border-bottom: 0; }
.big { display: flex; flex-direction: column; align-items: center; align-self: start; padding-top: 1px; line-height: 11px; }
.big svg { width: 20px; height: 20px; margin-bottom: 4px; }
.big .caret { margin: 3px 0 0; }
.big.tall svg { width: 22px; height: 24px; margin-bottom: 0; }
.save { width: 31px; }
.save svg { width: 18px; }
.g-edit { width: 111px; }
.c-cut { width: 35px; }
.g-layer { width: 141px; padding-left: 1px; border-right-color: #d8dae6; }
.c-sel { width: 27px; }
.c-sel .tool { padding-left: 5px; }
.c-sel .on { width: 24px; }
.combos { display: flex; flex-direction: column; width: 109px; }
select {
  display: block;
  height: 14px;
  margin: 0;
  padding: 0 0 0 1px;
  border: 1px solid #d9d9de;
  border-radius: 0;
  appearance: none;
  color: #222;
  font: inherit;
  background-color: #fff;
  background-image: linear-gradient(#666, #666), linear-gradient(#666, #666);
  background-repeat: no-repeat;
  background-size: 4px 1px, 2px 1px;
  background-position: right 2px top 5px, right 3px top 6px;
}
.swatch {
  padding-left: 26px;
  background-image: linear-gradient(#5a4000, #5a4000), linear-gradient(#666, #666), linear-gradient(#666, #666);
  background-size: 24px 7px, 4px 1px, 2px 1px;
  background-position: 1px center, right 2px top 5px, right 3px top 6px;
}
select:disabled { color: #929297; opacity: 1; border-color: #bcbcc0; background-color: #efeff0; }
.g-zoom { width: 78px; }
.g-zoom .big { width: 26px; margin-right: 3px; }
.g-fit { width: 62px; }
.fit svg { color: #33436a; }
.pinkish svg { color: #c9a3a6; }
.g-view { width: 48px; padding-left: 3px; }
.g-view .col { width: 23px; }
.g-view .on { padding: 0 2px; width: 16px; }
.g-draw { width: 39px; padding-left: 4px; gap: 6px; }
.g-mid, .g-one { width: 22px; padding-left: 5px; }
.g-mid { width: 23px; }
.g-port { width: 39px; padding-left: 4px; gap: 6px; }
.g-gnd { width: 24px; }
.g-bool { width: 247px; padding-left: 5px; }
.c-unite { width: 48px; }
.c-dup { width: 60px; }
.c-flip { width: 37px; }
.b-cut { width: 28px; }
.b-heal { width: 30px; }
.g-snap { width: 59px; padding-left: 3px; }
.snap { display: grid; grid-template: repeat(3, 15px) / repeat(3, 17px); }
.snap .tool { padding-left: 2px; }
.g-grid { width: 56px; }
.g-grid .combos { width: 50px; }
.g-last { width: 162px; padding-left: 5px; }
.c-vrm { width: 56px; }
.c-hfss { width: 67px; }

.tabs { display: grid; grid-template-columns: 50px 35px 41px 57px 43px 61px 71px 1fr; flex: none; height: 15px; padding-bottom: 3px; background: #efeff0; color: #555; }
.tabs > .active { border: solid #c9cede; border-width: 0 1px; background: #f9f9fb; color: #2c5f9e; }
.help { display: flex; gap: 5px; justify-content: flex-end; align-items: center; padding-right: 2px; }
.help svg { width: 10px; height: 10px; }

.work { display: flex; flex: 1; min-height: 0; border-top: 1px solid #777; }
.side { display: flex; flex-direction: column; flex: none; width: 233px; }
.pane { display: flex; flex-direction: column; min-height: 0; }
.tree { flex: 277; }
.props { flex: 282; }
.panehead { display: flex; align-items: center; flex: none; height: 15px; padding: 0 3px 1px 3px; gap: 4px; background: linear-gradient(#d5d8dc, #bdc1c5); }
.panehead h2 { margin-right: auto; }
.panehead svg { width: 8px; height: 8px; }
.projects { flex: 1; padding: 2px 0 0 3px; background: #fff; }
.projects li { display: flex; align-items: center; color: #111; font-weight: 700; line-height: 11px; }
.projects span { padding: 0 1px; background: #f1f1f1; }
.expand { width: 11px; height: 9px; }
.proj { width: 11px; height: 11px; }
.sheet { flex: 1; margin: 2px 2px 5px 1px; border: solid #999; border-width: 1px 1px 2px; border-top-color: #ccc; border-left-color: #ccc; background: #f0f0f0; }
.split, .msgtabs { flex: none; background: repeating-conic-gradient(#616e7e 0 25%, #8b8d92 0 50%) 0 0 / 2px 2px; }
.split.h { height: 4px; }
.split.v { width: 5px; }

.center { display: flex; flex-direction: column; flex: 1; min-width: 0; }
.canvas {
  display: flex;
  align-items: center;
  justify-content: center;
  flex: 1;
  min-height: 0;
  background:
    linear-gradient(90deg, #e6e6f6 1px, transparent 1px) 74px 0 / 100px 100%,
    linear-gradient(#e6e6f6 1px, transparent 1px) 0 59px / 100% 100px,
    linear-gradient(90deg, #f3f3fb 1px, transparent 1px) 4px 0 / 10px 100%,
    linear-gradient(#f3f3fb 1px, transparent 1px) 0 9px / 100% 10px,
    #fff;
}
.board { width: 361px; height: 370px; }
.copper, .chip { fill: #5a4000; }
.edge { stroke: #2c2c18; stroke-width: 1; }
.ring circle { fill: #fff; stroke: #222; stroke-width: 1; }
.rim circle { fill: #5a4000; stroke: #1a1400; stroke-width: 1; }
.drill, .hole { fill: #bdbdbd; }
.vias { fill: none; stroke: #c4c2bc; stroke-width: 3; stroke-linecap: round; stroke-dasharray: 0 10; }
.dots { fill: none; stroke: #c9c7c1; stroke-width: 8; stroke-linecap: round; }
.net { fill: #5a4000; stroke: #c268a4; stroke-width: 3; }
.pad { fill: none; stroke: #a86028; stroke-width: 2; }
.orange { fill: none; stroke: #c87838; stroke-width: 3; }
.pink { fill: #f07cc0; }
.pinkline { stroke: #e878b8; stroke-width: 3; }
.ink { fill: none; stroke: #221700; stroke-width: 3; stroke-opacity: .85; }
.track { fill: none; stroke: #c268a4; stroke-width: 23; }
.core { fill: none; stroke: #5a4000; stroke-width: 18; }
.track.thin { stroke-width: 15; }
.core.thin { stroke-width: 10; }
.fine { fill: none; stroke: #2a1d00; stroke-width: 3; }
.pins { fill: none; stroke: #e878b8; stroke-dasharray: 3 11; }
.chip { stroke: #d070ac; stroke-width: 3; }
.white { fill: none; stroke: #fff; stroke-width: 5; }
.white.dash { stroke-width: 3; stroke-dasharray: 6 3; }
.via, .via circle { fill: #666; stroke: #ddd; stroke-width: 3; }
.castle { fill: #5a4000; stroke: #d8d0d4; stroke-width: 3; }
.gap { stroke: #fff; stroke-width: 8; }

.messages { flex: none; }
.center .split.h { height: 5px; }
.msgbody { display: flex; height: 87px; background: #fff; }
.msglist { display: grid; flex: 1; grid-template-rows: repeat(8, minmax(0, 1fr)); height: 84px; padding-left: 20px; overflow: hidden; color: #111; font: 9px/10px "Liberation Serif", serif; white-space: nowrap; }
.msglist li { display: flex; align-items: center; gap: 3px; }
.msglist svg { width: 11px; height: 11px; }
.msglist li::before { content: ""; width: 6px; margin-right: -3px; border-top: 1px dotted #aaa; }
.scroll { display: flex; flex-direction: column; width: 10px; background: #f6f6f6; }
.scroll button, .thumb { display: grid; place-items: center; height: 10px; border-bottom: 1px solid #777; background: #eee; }
.scroll .thumb { height: 14px; margin: auto 0 8px; border-top: 1px solid #ddd; }
.up::after, .down::after { content: ""; border: 2px solid transparent; border-bottom: 3px solid #111; border-top: 0; }
.down::after { transform: rotate(180deg); }
.msgtabs { display: flex; align-items: flex-start; height: 15px; color: #eee; }
.msgtabs button { height: 13px; padding: 0 3px; }
.msgtabs .active { margin-right: 2px; background: #fff; color: #222; }

.status { display: flex; align-items: center; flex: none; height: 17px; padding: 0 51px 0 3px; background: #cfd6de; color: #666; }
.ready { margin-right: auto; color: #222; }
.toggle { display: flex; align-items: center; gap: 3px; height: 14px; margin-right: 3px; padding: 0 3px; border-radius: 2px; background: #f5f5f6; color: #111; font: 9px/10px "Liberation Serif", serif; }
.toggle svg { width: 8px; height: 8px; }
.status label { padding: 2px 7px 0 2px; }
.status input { width: 56px; height: 15px; margin: 0; padding: 0 0 4px; border: 0; background: #efeff0; color: #666; font: inherit; text-align: center; }
.status .short { width: 36px; }
.unit {
  width: 54px;
  margin: 0 2px;
  border-color: #555 #999 #999 #555;
  background-image: linear-gradient(#111, #111), linear-gradient(#111, #111), linear-gradient(#e4e4e4, #e4e4e4);
  background-size: 4px 1px, 2px 1px, 10px 12px;
  background-position: right 3px top 5px, right 4px top 6px, right 0 top 0;
}

.callout { position: absolute; left: 110px; top: 42px; width: 82px; height: 118px; pointer-events: none; }
```
